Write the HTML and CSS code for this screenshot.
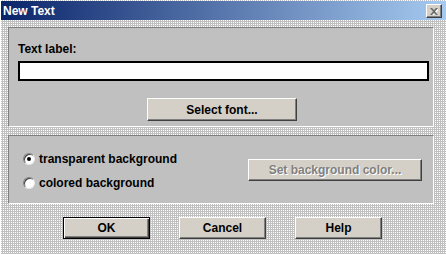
FILE: index.html
```html
<!DOCTYPE html>
<html lang="en">
<head>
  <meta charset="UTF-8">
  <title>New Text</title>
  <link rel="stylesheet" href="styles.css">
</head>
<body>
  <div class="window">
    <div class="titlebar">
      <span class="title">New Text</span>
      <button class="close" title="Close">
        <svg width="8" height="7" viewBox="0 0 8 7">
          <path d="M0 0h2l2 2 2-2h2L5 3.5 8 7H6L4 5 2 7H0l3-3.5z" fill="#fff" transform="translate(1 1)"/>
          <path d="M0 0h2l2 2 2-2h2L5 3.5 8 7H6L4 5 2 7H0l3-3.5z" fill="#6a6a6a"/>
        </svg>
      </button>
    </div>

    <div class="content">
      <div class="panel panel-text">
        <label class="label" for="label">Text label:</label>
        <input type="text" id="label" class="field">
        <button class="btn btn-font">Select font...</button>
      </div>

      <div class="panel panel-bg">
        <div class="radios">
          <label class="radio"><span class="dot checked"></span>transparent background</label>
          <label class="radio"><span class="dot"></span>colored background</label>
        </div>
        <button class="btn btn-color" disabled>Set background color...</button>
      </div>

      <div class="actions">
        <button class="btn default">OK</button>
        <button class="btn">Cancel</button>
        <button class="btn">Help</button>
      </div>
    </div>
  </div>
</body>
</html>
```

FILE: styles.css
```css
body {
  margin: 0;
  padding: 0;
  width: 446px;
  height: 254px;
  overflow: hidden;
  font-family: 'Liberation Sans', Arial, sans-serif;
  font-size: 12px;
  font-weight: bold;
  color: #000;
}
.window {
  box-sizing: border-box;
  width: 446px;
  height: 254px;
  padding-top: 1px;
  border-left: 1px solid #fff;
  /* 1px dither like the old classic theme */
  background:
    linear-gradient(90deg, transparent 1px, #c0c0c0 1px),
    linear-gradient(transparent 1px, #c0c0c0 1px),
    #fff;
  background-size: 2px 2px;
}
.titlebar {
  height: 19px;
  display: flex;
  align-items: flex-start;
  justify-content: space-between;
  background: linear-gradient(90deg, #0a246a, #a6caf0);
}
.title {
  color: #fff;
  font-size: 12px;
  line-height: 14px;
  margin: 3px 0 0 2px;
}
.close {
  width: 16px;
  height: 14px;
  margin: 3px 4px 0 0;
  padding: 0;
  display: flex;
  align-items: center;
  justify-content: center;
  background: #d4d0c8;
  border: 1px solid;
  border-color: #fff #404040 #404040 #fff;
  box-shadow: inset -1px -1px #808080;
}
.content {
  padding: 7px 12px 0 7px;
}
.panel {
  box-sizing: border-box;
  background: #c0c0c0;
  border: 1px solid;
  border-color: #808080 #fff #fff #808080;
}
.panel-text {
  height: 100px;
  padding: 14px 0 0 9px;
  display: flex;
  flex-direction: column;
  align-items: flex-start;
}
.label { line-height: 14px; }
.field {
  box-sizing: border-box;
  width: 411px;
  height: 20px;
  margin: 5px 0 0;
  border: 2px solid #000;
  background: #fff;
  padding: 0 3px;
  font: inherit;
  font-weight: normal;
}
.btn {
  box-sizing: border-box;
  height: 23px;
  padding: 0;
  background: #d4d0c8;
  border: 1px solid;
  border-color: #fff #404040 #404040 #fff;
  box-shadow: inset -1px -1px #808080;
  font: inherit;
  color: #000;
}
.btn-font {
  width: 150px;
  margin: 17px 0 0 129px;
}
.panel-bg {
  height: 69px;
  margin-top: 8px;
  padding: 16px 11px 0 14px;
  display: flex;
  justify-content: space-between;
  align-items: flex-start;
}
.radios {
  display: flex;
  flex-direction: column;
  gap: 10px;
}
.radio {
  display: flex;
  align-items: center;
  line-height: 14px;
  height: 14px;
}
.dot {
  box-sizing: border-box;
  width: 12px;
  height: 12px;
  margin: 0 4px 0 0;
  border-radius: 50%;
  background: #fff;
  border: 1px solid;
  border-color: #808080 #e8e8e8 #e8e8e8 #808080;
  box-shadow: inset 1px 1px #404040;
  display: flex;
  align-items: center;
  justify-content: center;
}
.dot.checked::after {
  content: "";
  width: 4px;
  height: 4px;
  border-radius: 50%;
  background: #000;
}
.btn-color {
  width: 174px;
  height: 22px;
  margin-top: 7px;
}
.btn:disabled {
  color: #808080;
  text-shadow: 1px 1px #fff;
}
.actions {
  display: flex;
  gap: 29px;
  margin-top: 13px;
  padding-left: 55px;
}
.actions .btn {
  width: 87px;
  height: 22px;
}
.actions .btn.default {
  border-color: #000;
  box-shadow: inset 1px 1px #fff, inset -1px -1px #404040, inset -2px -2px #808080;
}
```
